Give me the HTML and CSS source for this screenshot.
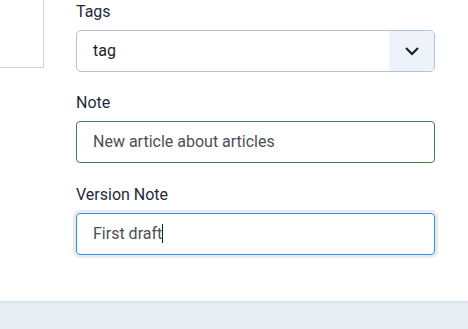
FILE: index.html
```html
<!DOCTYPE html>
<html lang="en">
<head>
  <meta charset="UTF-8">
  <title>Article options</title>
  <link rel="stylesheet" href="styles.css">
</head>
<body>
  <div class="panel">
    <div class="lateral"></div>
    <div class="campos">
      <div class="grupo grupo-tags">
        <label class="etiqueta">Tags</label>
        <div class="selector">
          <span class="selector-valor">tag</span>
          <span class="selector-boton">
            <svg width="16" height="10" viewBox="0 0 16 10">
              <path d="M2 2 L8 8 L14 2" fill="none" stroke="#1b1f24" stroke-width="2.2"/>
            </svg>
          </span>
        </div>
      </div>

      <div class="grupo">
        <label class="etiqueta">Note</label>
        <div class="campo valido">New article about articles</div>
      </div>

      <div class="grupo">
        <label class="etiqueta">Version Note</label>
        <div class="campo foco">First draft<span class="cursor"></span></div>
      </div>
    </div>
  </div>
</body>
</html>
```

FILE: styles.css
```css
body {
  margin: 0;
  font-family: 'Roboto', 'Liberation Sans', sans-serif;
  background-color: #e9eef4;
  height: 329px;
  overflow: hidden;
}

.panel {
  display: flex;
  height: 301px;
  background-color: #ffffff;
  box-shadow: 0 1px 4px rgba(130, 150, 180, 0.25);
}

.lateral {
  width: 43px;
  height: 67px;
  border-right: 1px solid #cfd2d6;
  border-bottom: 1px solid #cfd2d6;
}

.campos {
  margin-left: 32px;
  width: 359px;
}

.grupo {
  margin-bottom: 20px;
}

.grupo-tags {
  margin-bottom: 19px;
}

.etiqueta {
  display: block;
  height: 24px;
  line-height: 24px;
  font-size: 16px;
  color: #1f2a3a;
  margin-bottom: 6px;
}

.selector {
  display: flex;
  height: 42px;
  box-sizing: border-box;
  border: 1px solid #b4c1d8;
  border-radius: 5px;
  overflow: hidden;
}

.selector-valor {
  flex: 1;
  line-height: 40px;
  padding-left: 16px;
  font-size: 16px;
  color: #1b1f24;
}

.selector-boton {
  width: 45px;
  background-color: #eef2fa;
  display: flex;
  align-items: center;
  justify-content: center;
}

.campo {
  height: 42px;
  box-sizing: border-box;
  border: 1px solid #3e7d4f;
  border-radius: 4px;
  padding-left: 16px;
  line-height: 40px;
  font-size: 16px;
  color: #4a4f55;
}

.foco {
  border-color: #2e8ff0;
  box-shadow: 0 0 0 3px #ebebeb;
}

.cursor {
  display: inline-block;
  width: 1px;
  height: 19px;
  background-color: #1b1f24;
  vertical-align: -4px;
}
```
